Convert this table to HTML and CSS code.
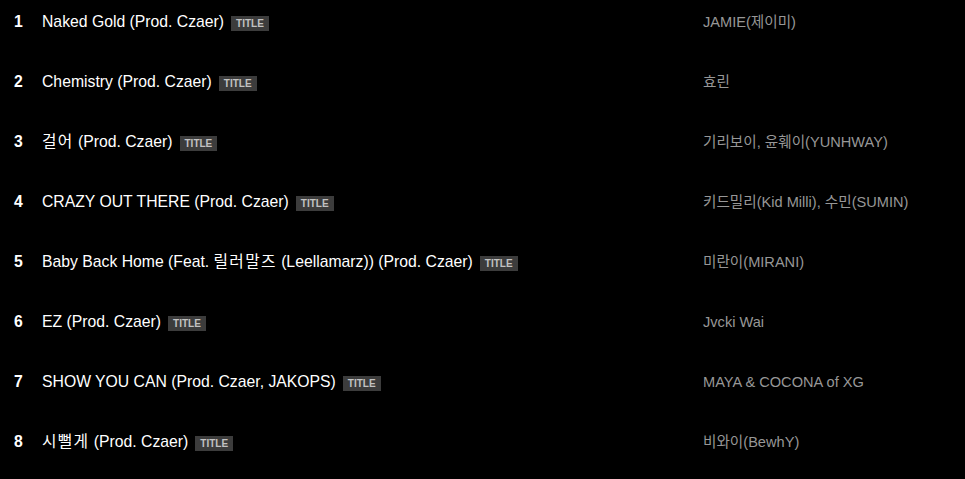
FILE: index.html
```html
<!DOCTYPE html>
<html lang="ko">
<head>
    <meta charset="UTF-8">
    <title>Tracklist</title>
    <link rel="stylesheet" href="styles.css">
</head>
<body>
    <ol class="tracklist">
        <li class="track">
            <span class="track-no">1</span>
            <span class="track-title">Naked Gold (Prod. Czaer)<span class="badge">TITLE</span></span>
            <span class="track-artist">JAMIE(제이미)</span>
        </li>
        <li class="track">
            <span class="track-no">2</span>
            <span class="track-title">Chemistry (Prod. Czaer)<span class="badge">TITLE</span></span>
            <span class="track-artist">효린</span>
        </li>
        <li class="track">
            <span class="track-no">3</span>
            <span class="track-title"><span class="ko">걸어</span>&nbsp;(Prod. Czaer)<span class="badge">TITLE</span></span>
            <span class="track-artist">기리보이, 윤훼이(YUNHWAY)</span>
        </li>
        <li class="track">
            <span class="track-no">4</span>
            <span class="track-title">CRAZY OUT THERE (Prod. Czaer)<span class="badge">TITLE</span></span>
            <span class="track-artist">키드밀리(Kid Milli), 수민(SUMIN)</span>
        </li>
        <li class="track">
            <span class="track-no">5</span>
            <span class="track-title">Baby Back Home (Feat.&nbsp;<span class="ko">릴러말즈</span>&nbsp;(Leellamarz)) (Prod. Czaer)<span class="badge">TITLE</span></span>
            <span class="track-artist">미란이(MIRANI)</span>
        </li>
        <li class="track">
            <span class="track-no">6</span>
            <span class="track-title">EZ (Prod. Czaer)<span class="badge">TITLE</span></span>
            <span class="track-artist">Jvcki Wai</span>
        </li>
        <li class="track">
            <span class="track-no">7</span>
            <span class="track-title">SHOW YOU CAN (Prod. Czaer, JAKOPS)<span class="badge">TITLE</span></span>
            <span class="track-artist">MAYA &amp; COCONA of XG</span>
        </li>
        <li class="track">
            <span class="track-no">8</span>
            <span class="track-title"><span class="ko">시뻘게</span>&nbsp;(Prod. Czaer)<span class="badge">TITLE</span></span>
            <span class="track-artist">비와이(BewhY)</span>
        </li>
    </ol>
</body>
</html>
```

FILE: styles.css
```css
body {
    margin: 0;
    background: #000;
    color: #fff;
    font-family: "Liberation Sans", Arial, "Noto Sans CJK KR", sans-serif;
    font-size: 15.75px;
}

.tracklist {
    list-style: none;
    margin: 0;
    padding: 12px 0 0;
}

.track {
    display: flex;
    align-items: flex-start;
    height: 60px;
    line-height: 20px;
}

.track-no {
    width: 28px;
    padding-left: 14px;
    font-weight: bold;
}

.track-title {
    width: 661px;
    display: flex;
    align-items: center;
    white-space: pre;
}

.track-title .ko {
    letter-spacing: 1.3px;
}

.badge {
    display: inline-block;
    margin: 2px 0 0 7px;
    padding: 0 5px;
    height: 15px;
    line-height: 15px;
    background: #3c3c3c;
    color: #c2c2c2;
    font-size: 10px;
    font-weight: bold;
}

.track-artist {
    color: #979797;
    font-size: 14.6px;
}
```
